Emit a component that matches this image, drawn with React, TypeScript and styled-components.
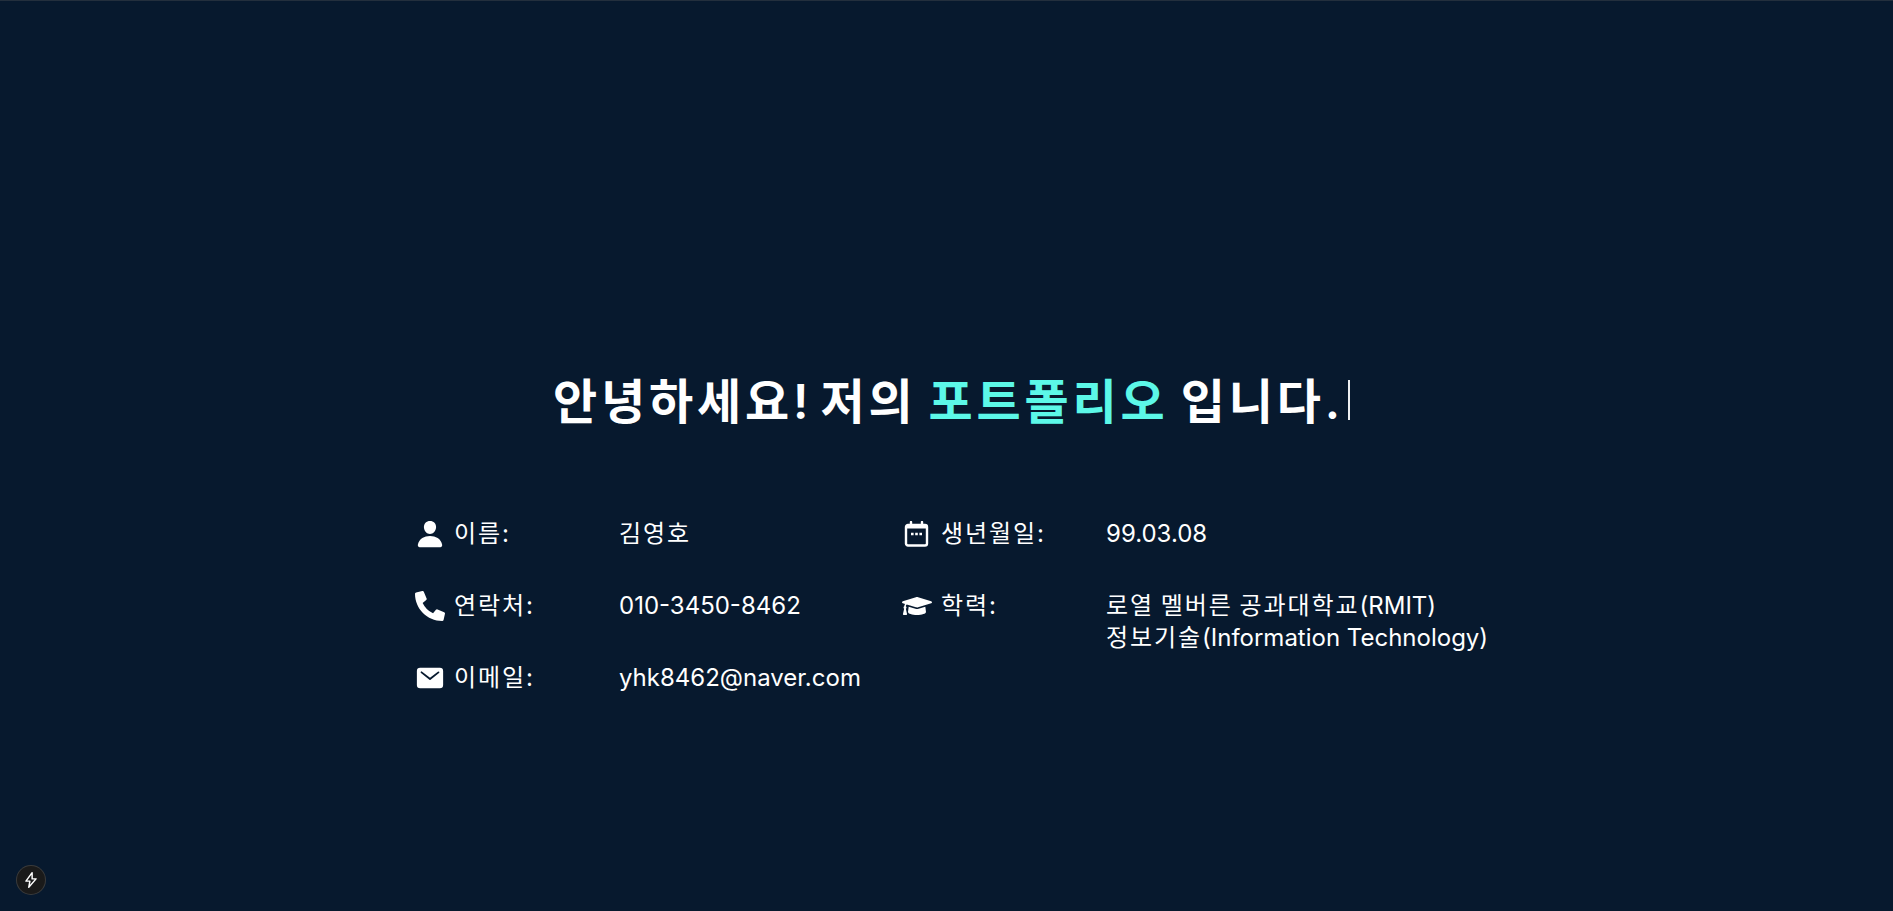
import React from 'react';
import styled, {createGlobalStyle} from 'styled-components';
import {FaGraduationCap, FaPhoneAlt} from 'react-icons/fa';
import {IoMail, IoPerson} from 'react-icons/io5';

const GlobalStyle = createGlobalStyle`
  html, body {
    margin: 0;
    padding: 0;
    background: #07192e;
  }
`;

const Page = styled.main`
  box-sizing: border-box;
  height: 911px;
  overflow: hidden;
  padding-top: 369px;
  background: #07192e;
  border-top: 1px solid #232f3d;
  color: #fff;
  font-family: Inter, "Noto Sans CJK KR", sans-serif;
`;

const Title = styled.h1`
  margin: 0 0 84px;
  padding-left: 10px;
  height: 64px;
  font-size: 48px;
  line-height: 64px;
  font-weight: 600;
  text-align: center;
`;

// Hangul in the reference sits on a full 1em advance, Noto's is 0.92em
const Ko = styled.span`
  letter-spacing: 0.08em;
`;

const Accent = styled(Ko)`
  color: #5cf8e8;
`;

const Cursor = styled.span`
  display: inline-block;
  width: 2px;
  height: 40px;
  margin-left: 8px;
  vertical-align: -1px;
  background: #eef0f2;
`;

const InfoColumns = styled.div`
  display: flex;
  margin-left: 415px;
  font-size: 24px;
  line-height: 32px;
`;

const InfoColumn = styled.div`
  display: grid;
  flex: 0 0 487px;
  grid-template-columns: 204px max-content;
  grid-auto-rows: min-content;
  row-gap: 40px;
`;

const Label = styled.div`
  display: flex;
  align-items: flex-start;
`;

const IconSlot = styled.span`
  display: flex;
  flex: 0 0 25px;
  width: 25px;
  min-width: 0;
  height: 32px;
  margin: 0 12px 0 2px;
  align-items: center;
  justify-content: center;
  font-size: 30px;

  svg {
    flex-shrink: 0;
  }
`;

const DevBadge = styled.div`
  position: absolute;
  left: 17px;
  top: 866px;
  display: flex;
  width: 28px;
  height: 28px;
  align-items: center;
  justify-content: center;
  border-radius: 50%;
  background: #1a1a1a;
  box-shadow: 0 0 0 1px #3b3b3b;
`;

const CalendarIcon = () => (
  <svg width="25" height="26" viewBox="0 0 25 26" fill="none">
    <rect x="2" y="4" width="21" height="20.5" rx="2" stroke="#fff" strokeWidth="2.4" />
    <rect x="2" y="4" width="21" height="3.5" fill="#fff" />
    <path d="M7 1v4M18 1v4" stroke="#fff" strokeWidth="2.4" strokeLinecap="round" />
    <path d="M7 13h2.6M11.2 13h2.6M15.4 13h2.6" stroke="#fff" strokeWidth="2.4" />
  </svg>
);

const BoltIcon = () => (
  <svg width="18" height="18" viewBox="0 0 16 16" fill="none">
    <path d="M9 1.5 3.5 9H7l-1 5.5L12.5 7H9z" stroke="#fff" strokeWidth="1.3" strokeLinejoin="round" />
  </svg>
);

const App = () => (
  <>
    <GlobalStyle />
    <Page>
      <Title>
        <Ko>안녕하세요</Ko>! <Ko>저의</Ko> <Accent>포트폴리오</Accent> <Ko>입니다</Ko>.<Cursor />
      </Title>
      <InfoColumns>
        <InfoColumn>
          <Label><IconSlot><IoPerson /></IconSlot><Ko>이름</Ko>:</Label>
          <div><Ko>김영호</Ko></div>
          <Label><IconSlot><FaPhoneAlt /></IconSlot><Ko>연락처</Ko>:</Label>
          <div>010-3450-8462</div>
          <Label><IconSlot><IoMail /></IconSlot><Ko>이메일</Ko>:</Label>
          <div>yhk8462@naver.com</div>
        </InfoColumn>
        <InfoColumn>
          <Label><IconSlot><CalendarIcon /></IconSlot><Ko>생년월일</Ko>:</Label>
          <div>99.03.08</div>
          <Label><IconSlot><FaGraduationCap /></IconSlot><Ko>학력</Ko>:</Label>
          <div>
            <Ko>로열</Ko> <Ko>멜버른</Ko> <Ko>공과대학교</Ko>(RMIT)<br />
            <Ko>정보기술</Ko>(Information Technology)
          </div>
        </InfoColumn>
      </InfoColumns>
      <DevBadge><BoltIcon /></DevBadge>
    </Page>
  </>
);

export default App;
